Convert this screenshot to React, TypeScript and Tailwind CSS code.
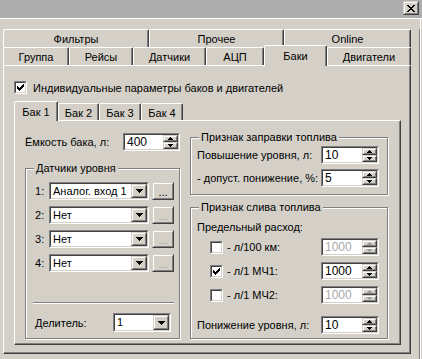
import React from 'react';

// pixel glyphs (1 char = 1px)
const Pix = ({ rows, color = '#000' }: { rows: string[]; color?: string }) => (
    <svg width={rows[0].length} height={rows.length} shapeRendering="crispEdges" className="block">
        {rows.map((r, y) =>
            r.split('').map((c, x) => (c === '#' ? <rect key={`${x}-${y}`} x={x} y={y} width={1} height={1} fill={color} /> : null))
        )}
    </svg>
);

const CLOSE = ['##....##', '.##..##.', '..####..', '...##...', '..####..', '.##..##.', '##....##'];
const CHECK = ['......#', '.....##', '#...###', '##.###.', '#####..', '.###...', '..#....'];
const DOWN = ['#######', '.#####.', '..###..', '...#...'];
const UP_S = ['..#..', '.###.', '#####'];
const DOWN_S = ['#####', '.###.', '..#..'];

const Raised: React.FC<{ className?: string; children?: React.ReactNode }> = ({ className = '', children }) => (
    <div className={`border border-t-[#d4d0c8] border-l-[#d4d0c8] border-b-[#404040] border-r-[#404040] bg-[#d4d0c8] ${className}`}>
        <div className="h-full w-full border border-t-white border-l-white border-b-[#808080] border-r-[#808080] flex items-center justify-center">
            {children}
        </div>
    </div>
);

const Sunken: React.FC<{ className?: string; children?: React.ReactNode }> = ({ className = '', children }) => (
    <div className={`border border-t-[#808080] border-l-[#808080] border-b-white border-r-white ${className}`}>
        <div className="h-full w-full border border-t-[#404040] border-l-[#404040] border-b-[#d4d0c8] border-r-[#d4d0c8] bg-white flex items-stretch">
            {children}
        </div>
    </div>
);

const Spin: React.FC<{ value: string; disabled?: boolean; className?: string }> = ({ value, disabled = false, className = 'w-[58px]' }) => (
    <Sunken className={`h-[18px] shrink-0 ${className}`}>
        <span className={`flex-1 pl-[2px] text-[12px] leading-[14px] ${disabled ? 'text-[#a8a8a8]' : 'text-black'}`}>{value}</span>
        <div className="flex flex-col w-[15px]">
            <Raised className="flex-1">
                <Pix rows={UP_S} color={disabled ? '#a0a0a0' : '#000'} />
            </Raised>
            <Raised className="flex-1">
                <Pix rows={DOWN_S} color={disabled ? '#a0a0a0' : '#000'} />
            </Raised>
        </div>
    </Sunken>
);

const Combo: React.FC<{ value: string; className?: string }> = ({ value, className = '' }) => (
    <Sunken className={`h-[18px] shrink-0 ${className}`}>
        <span className="flex-1 pl-[2px] leading-[14px] overflow-hidden">{value}</span>
        <Raised className="w-[16px]">
            <Pix rows={DOWN} />
        </Raised>
    </Sunken>
);

const Check: React.FC<{ checked?: boolean }> = ({ checked = false }) => (
    <Sunken className="w-[13px] h-[13px] shrink-0">
        <div className="flex-1 flex items-center justify-center">{checked && <Pix rows={CHECK} />}</div>
    </Sunken>
);

const Dots: React.FC<{ disabled?: boolean }> = ({ disabled = false }) => (
    <Raised className="w-[22px] h-[18px]">
        <span className={`text-[11px] leading-none mt-[2px] ${disabled ? 'text-[#a0a0a0]' : 'text-black'}`}>...</span>
    </Raised>
);

const Group: React.FC<{ title: string; className?: string; children?: React.ReactNode }> = ({ title, className = '', children }) => (
    <div className={`relative border border-[#808080] shadow-[inset_1px_1px_0_#fff,1px_1px_0_#fff] ${className}`}>
        <span className="absolute -top-[8px] left-[8px] px-[2px] bg-[#d4d0c8] leading-[14px]">{title}</span>
        {children}
    </div>
);

const Tab: React.FC<{ label: string; className: string; selected?: boolean }> = ({ label, className, selected = false }) => (
    <div
        className={`flex justify-center bg-[#d4d0c8] border-t border-l border-r border-t-white border-l-white border-r-[#404040] rounded-t-[2px] shadow-[inset_-1px_0_0_#808080] ${
            selected ? 'relative z-10 pt-[3px]' : 'pt-[2px]'
        } ${className}`}
    >
        <span className="leading-[14px]">{label}</span>
    </div>
);

export default function App() {
    return (
        <div className="w-[422px] h-[359px] overflow-hidden bg-[#d4d0c8] text-[11px] text-black whitespace-nowrap font-['Liberation_Sans',Arial,sans-serif]">
            {/* title strip */}
            <div className="h-[18px] bg-[#adadad] flex justify-end items-start pt-[1px] pr-[3px]">
                <Raised className="w-[16px] h-[14px]">
                    <Pix rows={CLOSE} />
                </Raised>
            </div>
            <div className="h-px bg-white" />

            <div className="flex">
                <div className="pt-[10px] pl-[3px] w-[411px]">
                    {/* back row */}
                    <div className="flex h-[18px]">
                        <Tab label="Фильтры" className="w-[146px] h-[18px]" />
                        <Tab label="Прочее" className="w-[135px] h-[18px]" />
                        <Tab label="Online" className="w-[127px] h-[18px]" />
                    </div>
                    {/* front row */}
                    <div className="flex items-start h-[18px]">
                        <Tab label="Группа" className="w-[66px] h-[18px]" />
                        <Tab label="Рейсы" className="w-[64px] h-[18px]" />
                        <Tab label="Датчики" className="w-[73px] h-[18px]" />
                        <Tab label="АЦП" className="w-[58px] h-[18px]" />
                        <Tab label="Баки" className="w-[63px] h-[21px] -mt-[2px]" selected />
                        <Tab label="Двигатели" className="w-[84px] h-[18px]" />
                    </div>

                    {/* page */}
                    <div className="h-[289px] border-t border-l border-r border-b border-t-white border-l-white border-r-[#404040] border-b-[#404040]">
                        <div className="h-full border-r border-b border-r-[#808080] border-b-[#808080]">
                            <div className="flex items-center gap-[6px] ml-[10px] pt-[15px] h-[28px]">
                                <Check checked />
                                <span className="leading-[14px]">Индивидуальные параметры баков и двигателей</span>
                            </div>

                            {/* inner tabs */}
                            <div className="ml-[10px] mt-[7px] flex items-end h-[19px]">
                                <Tab label="Бак 1" className="w-[44px] h-[20px] self-start" selected />
                                <Tab label="Бак 2" className="w-[41px] h-[17px]" />
                                <Tab label="Бак 3" className="w-[42px] h-[17px]" />
                                <Tab label="Бак 4" className="w-[42px] h-[17px]" />
                            </div>

                            <div className="ml-[10px] w-[387px] h-[225px] border-t border-l border-r border-b border-t-white border-l-white border-r-[#404040] border-b-[#404040]">
                                <div className="h-full flex border-r border-b border-r-[#808080] border-b-[#808080]">
                                    {/* left column */}
                                    <div className="ml-[10px] w-[156px] flex flex-col">
                                        <div className="mt-[12px] h-[18px] flex items-center">
                                            <span className="w-[98px] leading-[14px]">Ёмкость бака, л:</span>
                                            <Spin value="400" className="w-[57px]" />
                                        </div>
                                        <Group title="Датчики уровня" className="mt-[17px] w-[155px] h-[171px]">
                                            <div className="pt-[13px] pl-[9px] flex flex-col gap-[6px]">
                                                {['Аналог. вход 1', 'Нет', 'Нет', 'Нет'].map((v, i) => (
                                                    <div key={i} className="flex items-center h-[18px]">
                                                        <span className="w-[14px] leading-[14px]">{i + 1}:</span>
                                                        <Combo value={v} className="w-[100px]" />
                                                        <div className="ml-[3px]">
                                                            <Dots disabled={i > 0} />
                                                        </div>
                                                    </div>
                                                ))}
                                            </div>
                                            <div className="mt-[30px] ml-[7px] w-[141px] border-t border-b border-t-[#808080] border-b-white" />
                                            <div className="mt-[9px] pl-[9px] flex items-center h-[19px]">
                                                <span className="w-[78px] leading-[14px]">Делитель:</span>
                                                <Combo value="1" className="w-[58px] h-[19px]" />
                                            </div>
                                        </Group>
                                    </div>

                                    {/* right column */}
                                    <div className="ml-[9px] w-[198px] flex flex-col">
                                        <Group title="Признак заправки топлива" className="mt-[16px] h-[58px]">
                                            <div className="pt-[8px] pl-[6px] pr-[8px] flex flex-col gap-[5px]">
                                                <div className="flex items-center justify-between h-[18px]">
                                                    <span className="leading-[14px]">Повышение уровня, л:</span>
                                                    <Spin value="10" />
                                                </div>
                                                <div className="flex items-center justify-between h-[18px]">
                                                    <span className="leading-[14px]">- допуст. понижение, %:</span>
                                                    <Spin value="5" />
                                                </div>
                                            </div>
                                        </Group>
                                        <Group title="Признак слива топлива" className="mt-[12px] h-[132px]">
                                            <div className="pt-[12px] pl-[6px] pr-[8px]">
                                                <div className="leading-[14px]">Предельный расход:</div>
                                                <div className="mt-[4px] flex flex-col gap-[6px]">
                                                    {[
                                                        ['- л/100 км:', false],
                                                        ['- л/1 МЧ1:', true],
                                                        ['- л/1 МЧ2:', false],
                                                    ].map(([label, on], i) => (
                                                        <div key={i} className="flex items-center h-[18px] pl-[13px]">
                                                            <Check checked={on as boolean} />
                                                            <span className="ml-[4px] flex-1 leading-[14px]">{label as string}</span>
                                                            <Spin value="1000" disabled={!on} />
                                                        </div>
                                                    ))}
                                                </div>
                                                <div className="mt-[12px] flex items-center justify-between h-[18px]">
                                                    <span className="leading-[14px]">Понижение уровня, л:</span>
                                                    <Spin value="10" />
                                                </div>
                                            </div>
                                        </Group>
                                    </div>
                                </div>
                            </div>
                        </div>
                    </div>
                </div>
                <div className="ml-[8px] mt-[10px] w-px h-[330px] bg-[#808080]" />
                <div className="w-px h-[340px] bg-white" />
            </div>
        </div>
    );
}
